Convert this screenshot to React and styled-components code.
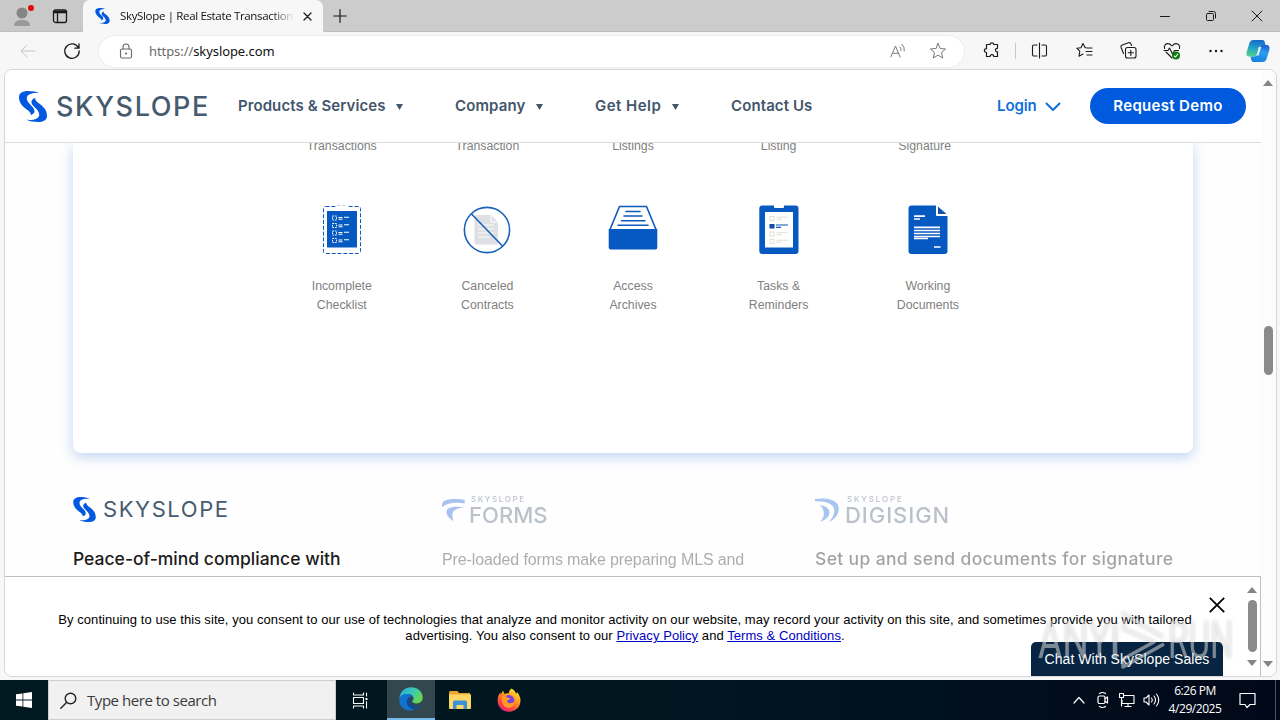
import React from 'react';
import styled, { createGlobalStyle } from 'styled-components';

const GlobalStyle = createGlobalStyle`
    * {
        box-sizing: border-box;
    }

    body {
        margin: 0;
        overflow: hidden;
        font-family: "Liberation Sans", Arial, sans-serif;
    }
`;

const Screen = styled.div`
    position: relative;
    width: 1280px;
    height: 720px;
    display: flex;
    flex-direction: column;
    background: #f7f7f7;
    overflow: hidden;
    white-space: nowrap;

    svg {
        display: block;
        flex: none;
    }
`;

/* browser chrome */

const TabStrip = styled.div`
    display: flex;
    height: 32px;
    background: #cccccc;
`;

const ProfileArea = styled.div`
    display: flex;
    align-items: center;
    gap: 18px;
    width: 83px;
    padding-left: 12px;
    background: #c9c9c9;
    border-bottom: 1px solid #bdbdbd;
    border-radius: 0 0 4px 0;
`;

const Tab = styled.div`
    display: flex;
    align-items: center;
    width: 240px;
    padding: 0 9px 0 12px;
    background: #f7f7f7;
    border-radius: 7px 7px 0 0;
`;

const TabTitle = styled.span`
    width: 176px;
    margin: 0 7px 0 10px;
    overflow: hidden;
    font: 11.5px/16px "Open Sans", sans-serif;
    letter-spacing: -0.34px;
    color: #111;
    mask-image: linear-gradient(90deg, #000 152px, transparent 174px);
`;

const TabRest = styled.div`
    flex: 1;
    display: flex;
    align-items: center;
    justify-content: space-between;
    padding: 0 17px 0 10px;
    border-bottom: 1px solid #bdbdbd;
    border-radius: 0 0 0 4px;
`;

const WindowButtons = styled.div`
    display: flex;
    gap: 34px;
`;

const Toolbar = styled.div`
    display: flex;
    align-items: center;
    height: 37px;
    background: #f7f7f7;
`;

const ToolCell = styled.div`
    display: flex;
    align-items: center;
    justify-content: center;
    width: ${({ $w }) => $w || 44}px;
    height: 30px;
`;

const AddressBar = styled.div`
    display: flex;
    align-items: center;
    width: 865px;
    height: 31px;
    margin: 1px 5px 0;
    padding: 0 6px 0 19px;
    background: #fff;
    border-radius: 16px;
    box-shadow: 0 0 2px rgba(0, 0, 0, 0.12);
`;

const Url = styled.span`
    flex: 1;
    margin-left: 15px;
    font: 13px/18px "Noto Sans", sans-serif;
    letter-spacing: -0.08px;
    color: #111;

    span {
        color: #6b6b6b;
    }
`;

const Divider = styled.div`
    width: 1px;
    height: 16px;
    margin-left: 2px;
    background: #c8c8c8;
`;

/* page */

const Viewport = styled.div`
    position: relative;
    display: flex;
    width: 1273px;
    height: 608px;
    margin: 0 0 3px 4px;
    background: #fff;
    border: 1px solid #d4d6da;
    border-radius: 8px;
    overflow: hidden;
`;

const Page = styled.div`
    display: flex;
    flex-direction: column;
    width: 1256px;
`;

const Scrollbar = styled.div`
    display: flex;
    flex-direction: column;
    align-items: center;
    flex: 1;
    padding: ${({ $pad }) => $pad};
    background: ${({ $bg }) => $bg};
`;

const Arrow = styled.div`
    border: 5px solid transparent;
    ${({ $down }) => ($down ? 'border-top: 6px solid #858585; border-bottom: 0;' : 'border-bottom: 6px solid #858585; border-top: 0;')}
`;

const Thumb = styled.div`
    width: 9px;
    height: ${({ $h }) => $h}px;
    margin: ${({ $top }) => $top}px 0 auto;
    background: #8a8a8a;
    border-radius: 5px;
`;

const Header = styled.header`
    display: flex;
    align-items: center;
    height: 73px;
    padding: 0 15px 0 14px;
    background: #fff;
    border-bottom: 1px solid #dcdcdc;
`;

const Brand = styled.div`
    display: flex;
    align-items: center;
    gap: ${({ $small }) => ($small ? 7 : 9)}px;
    width: ${({ $small }) => ($small ? 'auto' : '219px')};
    height: ${({ $small }) => ($small ? '26px' : 'auto')};

    span {
        padding-top: 1px;
        font: ${({ $small }) => ($small ? '400 22px' : '500 27px')}/31px Inter, sans-serif;
        letter-spacing: ${({ $small }) => ($small ? 1.6 : 1.6)}px;
        color: #475b6f;
    }
`;

const NavItem = styled.a`
    display: flex;
    align-items: center;
    width: ${({ $w }) => $w}px;
    font: 600 15px/20px Inter, sans-serif;
    letter-spacing: ${({ $ls }) => $ls}px;
    color: ${({ $blue }) => ($blue ? '#0f70da' : '#42566c')};

    svg {
        margin-left: ${({ $gap }) => $gap || 10}px;
        margin-top: 1px;
    }
`;

const DemoButton = styled.button`
    width: 156px;
    height: 36px;
    margin-left: auto;
    padding: 0 0 1px;
    border: 0;
    border-radius: 18px;
    background: #005add;
    color: #fff;
    font: 600 15px/20px Inter, sans-serif;
    letter-spacing: 0.32px;
`;

const Main = styled.main`
    flex: 1;
    padding: 0 68px;
    overflow: hidden;
    background: #fefefe;
`;

const FeatureCard = styled.section`
    height: 310px;
    width: 1120px;
    background: #fff;
    border-radius: 0 0 8px 8px;
    box-shadow: 0 4px 13px rgba(60, 125, 210, 0.32);
`;

const FeatureRow = styled.div`
    display: grid;
    grid-template-columns: repeat(4, 145.6px) ${({ $last }) => $last}px;
    padding-left: 196px;
`;

const Feature = styled.div`
    display: flex;
    flex-direction: column;
    align-items: center;
    margin-top: ${({ $clipped }) => ($clipped ? -6 : 0)}px;

    svg {
        margin: 48px 0 21px;
    }

    span {
        font-size: 12.3px;
        line-height: 19px;
        color: #7f7f7f;
    }
`;

const Products = styled.section`
    display: grid;
    grid-template-columns: 369px 373px 1fr;
    padding-top: 43px;
`;

const Product = styled.div`
    opacity: ${({ $faded }) => ($faded ? 0.4 : 1)};
`;

const ProductLogo = styled.div`
    display: flex;
    height: 26px;
    gap: ${({ $gap }) => $gap}px;

    svg {
        margin-top: 2px;
    }
`;

const ProductName = styled.div`
    color: #56677a;
    font-family: Inter, sans-serif;
    font-weight: 500;

    small {
        display: block;
        margin: -1px 0 0 1px;
        font-size: 8px;
        line-height: 9px;
        letter-spacing: ${({ $sub }) => $sub}px;
    }

    span {
        display: block;
        margin-left: -1px;
        font-size: 22px;
        line-height: 22px;
        letter-spacing: ${({ $ls }) => $ls}px;
    }
`;

const Pitch = styled.p`
    margin: 25px 0 0;
    font: 500 17.5px/24px Inter, sans-serif;
    letter-spacing: ${({ $ls }) => $ls}px;
    color: #1b1b1b;
`;

const PlainPitch = styled(Pitch)`
    margin-top: 26px;
    font: 16px/24px "Liberation Sans", Arial, sans-serif;
    color: #333;
`;

const CookieBanner = styled.div`
    position: relative;
    display: flex;
    height: 100px;
    border-top: 1px solid #bfc0c2;
    border-right: 1px solid #bfc0c2;
    background: #fff;
`;

const CookieText = styled.p`
    width: 1240px;
    margin: 35px 0 0;
    font-size: 13px;
    line-height: 16px;
    letter-spacing: 0.06px;
    text-align: center;
    color: #000;

    a {
        color: #0000c4;
        text-decoration: underline;
    }
`;

const CloseIcon = styled.svg`
    position: absolute;
    left: 1204px;
    top: 20px;
`;

const ChatTab = styled.div`
    position: absolute;
    left: 1026px;
    bottom: 0;
    width: 192px;
    height: 34px;
    border-radius: 5px 5px 0 0;
    background: #072543;
    color: #fff;
    font-size: 14px;
    line-height: 35px;
    letter-spacing: 0.06px;
    text-align: center;
`;

const Watermark = styled.div`
    position: absolute;
    left: 1038px;
    top: 611px;
    display: flex;
    align-items: center;
    width: 200px;
    height: 60px;
    color: rgba(255, 255, 255, 0.45);
    filter: drop-shadow(0 0 1.5px rgba(60, 60, 60, 0.5));
`;

const WatermarkWord = styled.span`
    width: ${({ $w }) => $w}px;
    font: 400 51px/60px Roboto, sans-serif;
    transform: scaleX(${({ $sx }) => $sx});
    transform-origin: 0 50%;
`;

/* taskbar */

const Taskbar = styled.div`
    display: flex;
    align-items: center;
    height: 40px;
    background: linear-gradient(90deg, #001820, #001620 55%, #020819);
`;

const TaskCell = styled.div`
    display: flex;
    align-items: center;
    justify-content: center;
    width: ${({ $w }) => $w || 48}px;
    height: 40px;
    background: ${({ $active }) => ($active ? '#33474f' : 'none')};
    border-bottom: ${({ $active }) => ($active ? '2px solid #76b9ed' : '0')};
`;

const SearchBox = styled.div`
    display: flex;
    align-items: center;
    gap: 10px;
    width: 288px;
    height: 40px;
    padding-left: 11px;
    background: #f1f1f1;
    border: 1px solid #cfcfcf;
    color: #3b3b3b;
    font: 15px/20px "Open Sans", sans-serif;
    letter-spacing: -0.45px;
`;

const Tray = styled.div`
    display: flex;
    align-items: center;
    margin-left: auto;
    height: 40px;
`;

const Clock = styled.div`
    width: 60px;
    font: 12px/18px "Open Sans", sans-serif;
    letter-spacing: -0.45px;
    text-align: center;
    color: #fff;
`;

const ShowDesktop = styled.div`
    width: 5px;
    height: 40px;
    margin-left: 6px;
    border-left: 1px solid #4b525c;
`;

const Line = ({ w = 16, h = w, sw = 1, color = '#1a1a1a', box, children }) => (
    <svg width={w} height={h} viewBox={box || `0 0 ${w} ${h}`} fill="none" stroke={color} strokeWidth={sw} strokeLinecap="round" strokeLinejoin="round">
        {children}
    </svg>
);

const swoosh = 'M20.500 2.200C13 1.500 8.300 3.300 7.800 6.800 7.500 10 10 12.300 12.800 15.200 16 18.500 17.300 21.800 11.800 24.300 12.300 22 10.500 20.500 7.500 18.300 3 15 0 11.500 0 6 0 2 4 0 9 0 13 0 17.500.8 20.500 2.200z';

const SkyMark = ({ w, h }) => (
    <svg width={w} height={h} viewBox="0 0 28 31" fill="#0259e0">
        <path d={swoosh} />
        <path d={swoosh} transform="rotate(180 14 15.5)" />
    </svg>
);

const Caret = () => (
    <svg width="7" height="6" viewBox="0 0 7 6" fill="#42566c">
        <path d="M0 0h7L3.500 6z" />
    </svg>
);

const ChecklistIcon = () => (
    <svg width="50" height="52" viewBox="0 0 50 52" fill="none">
        <rect x="6.500" y="2.500" width="37" height="47" rx="2" stroke="#1059bd" strokeDasharray="4 1.800" />
        <path d="M19 1h12v3H19z" fill="#fff" />
        <path d="M20 1.500h10" stroke="#b9cfee" strokeDasharray="3 2" />
        <path d="M10 7h30v36.500H10z" fill="#0659c0" />
        {[12, 19.500, 27, 34.500].map((y) => (
            <g key={y} stroke="#fff">
                <rect x="15.500" y={y} width="4" height="4" strokeDasharray="1.600 1" />
                <path d={`M21.500 ${y + 1.500}h4M21.500 ${y + 3.200}h4M27 ${y + 1.300}h5`} strokeWidth="1.100" />
            </g>
        ))}
    </svg>
);

const CanceledIcon = () => (
    <svg width="50" height="52" viewBox="0 0 50 52" fill="none">
        <path d="M14 11h15l7 7v21a1.500 1.500 0 0 1-1.500 1.500h-20.500a1.500 1.500 0 0 1-1.500-1.500V12.500z" fill="#dfe0e4" />
        <path d="M29 11v7h7" stroke="#fff" />
        <path d="M16 21h16M16 25h16M16 29h16M16 33h11" stroke="#fafafa" strokeWidth="1.200" />
        <circle cx="25" cy="26" r="22.600" stroke="#1a62bd" strokeWidth="1.600" />
        <path d="M9.500 10l31 32" stroke="#1a5fba" strokeWidth="1.600" />
    </svg>
);

const ArchiveIcon = () => (
    <svg width="50" height="52" viewBox="0 0 50 52" fill="none">
        <path d="M2 25.500L11.500 2.500h27l9.500 23" stroke="#0b5abf" strokeWidth="1.600" />
        <path d="M18 7.500h14M16 12h18M13.500 16.700h23.500M10 21.200h30" stroke="#0b5abf" strokeWidth="1.600" strokeLinecap="round" />
        <path d="M.700 25h48.600v18.500a2 2 0 0 1-2 2H2.700a2 2 0 0 1-2-2z" fill="#0659c0" />
    </svg>
);

const TasksIcon = () => (
    <svg width="50" height="52" viewBox="0 0 50 52" fill="none">
        <rect x="5.300" y="1.500" width="39.200" height="48.500" rx="3" fill="#0659c0" />
        <path d="M20 1h10v2a1 1 0 0 1-1 1h-8a1 1 0 0 1-1-1z" fill="#fff" />
        <path d="M11 8h28v35.500H11z" fill="#fff" />
        {[12.500, 28, 35.500].map((y) => (
            <g key={y} stroke="#dddbd2" strokeWidth=".9">
                <rect x="16" y={y} width="4" height="4" />
                <path d={`M22.500 ${y + 0.700}h11M22.500 ${y + 2.700}h5`} />
            </g>
        ))}
        <path d="M15.500 20h5v4.500h-5z" fill="#0d4fa8" />
        <path d="M22 21h12M22 23.300h5" stroke="#0d59b8" strokeWidth="1.200" />
    </svg>
);

const WorkingIcon = () => (
    <svg width="50" height="52" viewBox="0 0 50 52" fill="none">
        <path d="M8.500 1.500H33v9.500a1 1 0 0 0 1 1h10.500V47a3 3 0 0 1-3 3H8.500a3 3 0 0 1-3-3V4.500a3 3 0 0 1 3-3z" fill="#0659c0" />
        <path d="M35 2.500l8.500 7.500h-8.500z" fill="#1355a5" />
        <path d="M11 12.200h11M11 15h6M11 23.300h26M11 26.500h26M11 29.500h26M11 32.500h26M11 34.500h14M31 43h6.500" stroke="#fff" strokeWidth="1.700" />
    </svg>
);

const EdgeIcon = () => (
    <svg width="24" height="24" viewBox="0 0 24 24">
        <defs>
            <linearGradient id="edgeTop" x1="0" y1="0" x2="1" y2=".5">
                <stop offset="0" stopColor="#28a9e5" />
                <stop offset=".6" stopColor="#3bcbb0" />
                <stop offset="1" stopColor="#66d652" />
            </linearGradient>
        </defs>
        <path d="M.5 11C1 4.500 6 .3 12 .3 19 .3 23.700 5 23.700 10.500c0 3.500-2.700 5.900-6 5.900-3 0-4.500-1-4.500-1.900 0-.8 1.300-1.300 1.300-3.100 0-2.400-2.500-4.500-5.800-4.500C5 6.900 2 8.500.5 11z" fill="url(#edgeTop)" />
        <path d="M.3 12.500C.7 8.500 4.500 6.900 8.700 6.900c2.500 0 4.600 1 5.500 2.800-3-1-6.400 1.300-6.400 5.300 0 4.500 4 7.300 8.300 7.300C9 25.800 0 21.300.3 12.500z" fill="#1273cf" />
        <path d="M7.800 15c0-2.500 1.200-4.300 3-5.200-.8 4.500 1.700 9.200 7.500 9.200 1.500 0 2.700-.3 3.900-1-1.300 2.300-3.700 4.300-6.100 4.400-4.300 0-8.300-3-8.300-7.400z" fill="#124b94" />
    </svg>
);

const FirefoxIcon = () => (
    <svg width="24" height="24" viewBox="0 0 24 24">
        <defs>
            <linearGradient id="foxBody" x1=".8" y1="0" x2=".2" y2="1">
                <stop offset="0" stopColor="#ffe83b" />
                <stop offset=".4" stopColor="#ff9a1f" />
                <stop offset=".7" stopColor="#ff4a3f" />
                <stop offset="1" stopColor="#e6157b" />
            </linearGradient>
        </defs>
        <path d="M14.500.5c3 1.600 4 3.500 4.400 5 .8-.1 1.100-.8 1.100-1.500 2.300 2.700 3.500 5.500 3.500 8.500C23.500 19 18.500 23.700 12 23.700S.6 19 .6 12.700c0-3.500 1-6 2.500-8.200l.7 2L6 2.500 7.500 6c1.500-.7 3-.8 4.300-.5 0-2 1-4 2.700-5z" fill="url(#foxBody)" />
        <circle cx="12" cy="12.300" r="5.300" fill="#7a43dc" />
        <path d="M5 8c3.500-.5 5 .6 5.800 2l2.500.3c-.4 1.400-2 1.500-3 2.200-.7 1.300.5 2.800 3 2.800 2 0 3.400-1 4-2 .6 4-2 6.500-5.700 6.500C7.500 19.800 4 16 5 8z" fill="#ff9b25" />
    </svg>
);

const CopilotIcon = () => (
    <svg width="24" height="24" viewBox="0 0 24 24">
        <defs>
            <linearGradient id="copLeft" x1=".5" y1="0" x2=".3" y2="1">
                <stop offset="0" stopColor="#1669c9" />
                <stop offset=".5" stopColor="#20a5c4" />
                <stop offset="1" stopColor="#56cf8b" />
            </linearGradient>
            <linearGradient id="copRight" x1=".6" y1="0" x2=".4" y2="1">
                <stop offset="0" stopColor="#1c5fd0" />
                <stop offset=".4" stopColor="#2f9df0" />
                <stop offset="1" stopColor="#1583e0" />
            </linearGradient>
        </defs>
        <path d="M7.500 1h9c1.500 0 2 1 2.500 3l.5 2h-3.500c-1.800 0-2.600 1-3 2.400l-2 6.600c-.5 1.600-1.200 2.500-3 2.500H3.500C.6 17.500 0 15.500.8 12.500L3.300 4.500C4 2 5.300 1 7.500 1z" fill="url(#copLeft)" />
        <path d="M16.500 23h-9C6 23 5.500 22 5 20l-.5-2.500H8c1.800 0 2.600-.8 3-2.200l2.200-7C13.700 6.900 14.400 6 16 6h4.500c2.900 0 3.500 2.500 2.700 5.500l-2.500 8c-.7 2.500-2 3.500-4.200 3.500z" fill="url(#copRight)" />
        <path d="M12.800 8h2.400l-2.700 8.500H9.800c.8-.5 1-1 1.300-1.800z" fill="#e6f4fb" />
    </svg>
);

const clippedLabels = ['Transactions', 'Transaction', 'Listings', 'Listing', 'Signature'];

const features = [
    { icon: ChecklistIcon, lines: ['Incomplete', 'Checklist'] },
    { icon: CanceledIcon, lines: ['Canceled', 'Contracts'] },
    { icon: ArchiveIcon, lines: ['Access', 'Archives'] },
    { icon: TasksIcon, lines: ['Tasks &', 'Reminders'] },
    { icon: WorkingIcon, lines: ['Working', 'Documents'] },
];

const Browser = () => (
    <>
        <TabStrip>
            <ProfileArea>
                <svg width="22" height="22" viewBox="0 0 22 22">
                    <circle cx="10" cy="8" r="5.500" fill="#858585" />
                    <path d="M2 21c0-4.500 3.500-6 8-6s8 1.500 8 6z" fill="#999" />
                    <circle cx="19" cy="3" r="3" fill="#e30613" />
                </svg>
                <Line sw={1.3}><rect x="1.500" y="2" width="13" height="12.500" rx="2" /><path d="M2 4h12" strokeWidth="2.400" /><path d="M5.500 5v9" /></Line>
            </ProfileArea>
            <Tab>
                <SkyMark w={15} h={16} />
                <TabTitle>SkySlope | Real Estate Transaction</TabTitle>
                <Line w={9} sw={1.3}><path d="M1 1l7 7M8 1L1 8" /></Line>
            </Tab>
            <TabRest>
                <Line w={14} sw={1.2}><path d="M7 .7v12.600M.7 7h12.600" /></Line>
                <WindowButtons>
                    <Line w={12}><path d="M1.500 6.500h9" /></Line>
                    <Line w={12}><rect x="1.500" y="3.500" width="7" height="7" rx="1" /><path d="M4 1.500h4.500a2 2 0 0 1 2 2V8" /></Line>
                    <Line w={12}><path d="M1 1l10 10M11 1L1 11" /></Line>
                </WindowButtons>
            </TabRest>
        </TabStrip>
        <Toolbar>
            <ToolCell $w={56}><Line color="#c4c4c4"><path d="M15 8H1M7 2L1 8l6 6" /></Line></ToolCell>
            <ToolCell $w={32}><Line w={18} sw={1.3}><path d="M15.500 6A7.200 7.200 0 1 0 16.200 9M16 2v4.200h-4.200" /></Line></ToolCell>
            <ToolCell $w={6} />
            <AddressBar>
                <Line w={16} color="#6a6a6a" sw={1.1}><rect x="2.500" y="6" width="11" height="9" rx="1.500" /><path d="M5 6V4a3 3 0 0 1 6 0v2" /><circle cx="8" cy="10.500" r=".5" fill="#6a6a6a" /></Line>
                <Url><span>https://</span>skyslope.com</Url>
                <ToolCell $w={40}><Line color="#7a7a7a"><path d="M.8 14L5.500 3 10 14M2.400 10.300h6.200M10 4q1.400 1.300 1 3.500M12 1.500q3 2.500 2.300 6.500" /></Line></ToolCell>
                <ToolCell $w={40}><Line w={18} color="#777"><path d="M9 1.500l2.200 5 5.300.5-4 3.600 1.200 5.400L9 13.200 4.300 16l1.200-5.400-4-3.600 5.300-.5z" /></Line></ToolCell>
            </AddressBar>
            <ToolCell><Line w={17} sw={1.2}><path d="M3.500 2.500H7c0-2.300 3.800-2.300 3.800 0h3.700v3.800c-2.700-.4-2.700 4 0 3.600v4.600h-3.700c0-2.500-3.800-2.500-3.800 0H3.500v-4c-2.800 0-2.800-3.800 0-3.800z" /></Line></ToolCell>
            <Divider />
            <ToolCell $w={46}><Line w={17} sw={1.1}><path d="M8.500 1v15M6 3H3a1.500 1.500 0 0 0-1.500 1.500v8A1.500 1.500 0 0 0 3 14h3M11 3h3a1.500 1.500 0 0 1 1.500 1.500v8A1.500 1.500 0 0 1 14 14h-3" /></Line></ToolCell>
            <ToolCell><Line w={17} sw={1.1}><path d="M10 5.800L9 5.600 7 1.500 5 5.700l-4.200.5 3 3-.8 5L7 12M11 6h5M10 9.500h6M11 13h5" /></Line></ToolCell>
            <ToolCell><Line w={17} sw={1.1}><rect x="5.500" y="5.500" width="10.500" height="10.500" rx="2" /><path d="M10.800 8.200v5.200M8.200 10.800h5.200M3.500 11.500L1.100 5.500A2 2 0 0 1 2.300 3l6.200-2.200A2 2 0 0 1 11 2l.6 1.500" /></Line></ToolCell>
            <ToolCell>
                <Line w={18} sw={1.1}>
                    <path d="M1.600 6.500C.5 3.500 3 1.500 5 1.600c2 0 3 1.300 4 2.400 1-1.100 2-2.400 4-2.400 2 0 4.500 2 3.400 5M3 10l6 6M1 8.500h4L6.500 6l3 6 2-3.500h4" />
                    <circle cx="13" cy="13.500" r="4" fill="#107c10" stroke="none" />
                    <path d="M11.300 14l1.200 1 2.300-3" stroke="#fff" />
                </Line>
            </ToolCell>
            <ToolCell><Line w={14} h={4} color="none"><g fill="#1a1a1a"><circle cx="1.500" cy="2" r="1.200" /><circle cx="7" cy="2" r="1.200" /><circle cx="12.500" cy="2" r="1.200" /></g></Line></ToolCell>
            <ToolCell $w={40}><CopilotIcon /></ToolCell>
        </Toolbar>
    </>
);

const SiteHeader = () => (
    <Header>
        <Brand>
            <SkyMark w={28} h={31} />
            <span>SKYSLOPE</span>
        </Brand>
        <NavItem $w={217} $ls={0.08}>Products &amp; Services<Caret /></NavItem>
        <NavItem $w={140} $ls={0.12} $gap={11}>Company<Caret /></NavItem>
        <NavItem $w={136} $ls={0.48} $gap={11}>Get Help<Caret /></NavItem>
        <NavItem $w={266} $ls={0.1}>Contact Us</NavItem>
        <NavItem $w={64} $ls={-0.1} $gap={8} $blue>
            Login
            <Line w={16} h={10} sw={2} color="#0f70da"><path d="M1.500 1.500L8 8l6.500-6.500" /></Line>
        </NavItem>
        <DemoButton>Request Demo</DemoButton>
    </Header>
);

const Content = () => (
    <Main>
        <FeatureCard>
            <FeatureRow $last={146.6}>
                {clippedLabels.map((label) => (
                    <Feature key={label} $clipped><span>{label}</span></Feature>
                ))}
            </FeatureRow>
            <FeatureRow $last={153}>
                {features.map(({ icon: Icon, lines }) => (
                    <Feature key={lines[0]}>
                        <Icon />
                        <span>{lines[0]}</span>
                        <span>{lines[1]}</span>
                    </Feature>
                ))}
            </FeatureRow>
        </FeatureCard>
        <Products>
            <Product>
                <Brand $small>
                    <SkyMark w={23} h={25} />
                    <span>SKYSLOPE</span>
                </Brand>
                <Pitch $ls={0}>Peace-of-mind compliance with</Pitch>
            </Product>
            <Product $faded>
                <ProductLogo $gap={5}>
                    <svg width="23" height="24" viewBox="0 0 23 24" fill="#2a68dc">
                        <path d="M0 9.500C-.5 4 2 2 8 1.200c5-.4 10-.3 14.700.5v3.800C16 4.300 5 4.300 0 9.500z" />
                        <path d="M22.500 9.500c-5 .3-9.500 1.500-11.500 4.300-1 2.500-1 6 .5 9.200-4.500-2.500-7.500-6.500-7-9.800C5.500 8.500 14 7.800 22.500 9.500z" />
                    </svg>
                    <ProductName $ls={0.05} $sub={1.6}>
                        <small>SKYSLOPE</small>
                        <span>FORMS</span>
                    </ProductName>
                </ProductLogo>
                <PlainPitch $ls={-0.12}>Pre-loaded forms make preparing MLS and</PlainPitch>
            </Product>
            <Product $faded>
                <ProductLogo $gap={7}>
                    <svg width="24" height="25" viewBox="0 0 24 25" fill="#2a6fdc">
                        <path d="M0 1c9-1.300 19.500-.4 23 6 2.500 7-2 14-9 17 4.500-5 7-11.500 4-15.500C15 4.500 8 3.300 0 3.300z" />
                        <path d="M4.500 7c5 .5 9.500 3 10 7 .3 4.500-4 8-9.500 9.700 3-3 4.200-6 3.800-9.200C8.500 11 7 9 4.500 7z" />
                    </svg>
                    <ProductName $ls={0.95} $sub={1.85}>
                        <small>SKYSLOPE</small>
                        <span>DIGISIGN</span>
                    </ProductName>
                </ProductLogo>
                <Pitch $ls={0.35}>Set up and send documents for signature</Pitch>
            </Product>
        </Products>
    </Main>
);

const Cookies = () => (
    <CookieBanner>
        <CookieText>
            By continuing to use this site, you consent to our use of technologies that analyze and monitor activity on our website, may record your activity on this site, and sometimes provide you with tailored
            <br />
            advertising. You also consent to our <a>Privacy Policy</a> and <a>Terms &amp; Conditions</a>.
        </CookieText>
        <Scrollbar $bg="#fff" $pad="10px 1px 10px 0">
            <Arrow />
            <Thumb $top={7} $h={52} />
            <Arrow $down />
        </Scrollbar>
        <CloseIcon width="16" height="16" viewBox="0 0 16 16" fill="none" stroke="#000" strokeWidth="1.800">
            <path d="M.8.8l14.400 14.400M15.200.8L.8 15.200" />
        </CloseIcon>
        <ChatTab>Chat With SkySlope Sales</ChatTab>
    </CookieBanner>
);

const WindowsTaskbar = () => (
    <Taskbar>
        <TaskCell>
            <svg width="16" height="16" viewBox="0 0 16 16" fill="#fff"><path d="M0 2.300l6.500-.9v6.200H0zM7.300 1.200L16 0v7.600H7.300zM0 8.400h6.500v6.200L0 13.700zM7.300 8.400H16V16l-8.700-1.200z" /></svg>
        </TaskCell>
        <SearchBox>
            <Line w={17} sw={1.4} color="#222"><circle cx="10.500" cy="6.500" r="5.300" /><path d="M6.500 10.500L.8 16.200" /></Line>
            Type here to search
        </SearchBox>
        <TaskCell $w={51}>
            <Line w={20} h={17} sw={1.1} color="#fff"><path d="M1.500 1v2h10V1M1.500 16v-2h10v2M1.500 5.500h10v6h-10zM14.500 1v3M14.500 9.500V16" /><path d="M13.500 6h2v2h-2z" fill="#fff" stroke="none" /></Line>
        </TaskCell>
        <TaskCell $active><EdgeIcon /></TaskCell>
        <TaskCell $w={50}>
            <svg width="22" height="20" viewBox="0 0 22 20">
                <path d="M0 2.500A1.500 1.500 0 0 1 1.500 1h7L10 3h11v6H0z" fill="#e8a82c" />
                <path d="M0 4.500h22V18a1 1 0 0 1-1 1H1a1 1 0 0 1-1-1z" fill="#ffd767" />
                <path d="M4 12a1.500 1.500 0 0 1 1.500-1.500h11A1.500 1.500 0 0 1 18 12v7h-3.500v-4h-7v4H4z" fill="#3a93d8" />
            </svg>
        </TaskCell>
        <TaskCell><FirefoxIcon /></TaskCell>
        <Tray>
            <TaskCell $w={24}><Line w={12} h={8} sw={1.2} color="#fff"><path d="M1 7l5-5.500L11 7" /></Line></TaskCell>
            <TaskCell $w={24}><Line w={14} h={18} sw={1.2} color="#fff"><rect x="2" y="5" width="7" height="7.500" rx="1.500" /><path d="M9 7.500l2.500-1.500v6L9 10.500M3.500 2.500q3-2 6 0M3.500 15.500q3 2 6 0" /></Line></TaskCell>
            <TaskCell $w={23}><Line w={17} h={16} sw={1.1} color="#fff"><path d="M6 3.500h10v8H4V8M10 11.500v3M7 14.500h6M1.500 1.500h4v4h-4zM3.500 5.500V14" /></Line></TaskCell>
            <TaskCell $w={27}><Line w={18} h={14} sw={1.1} color="#fff"><path d="M1 5v4h2l3 3V2L3 5zM8.500 5q1.500 2 0 4M11 3q3 4 0 8M13.500 1q4.500 6 0 12" /></Line></TaskCell>
            <Clock>6:26 PM<br />4/29/2025</Clock>
            <TaskCell $w={44}><Line w={17} h={17} sw={1.2} color="#fff"><path d="M1 1.500h15v11h-5L8 15.500l-2-3H1z" /></Line></TaskCell>
            <ShowDesktop />
        </Tray>
    </Taskbar>
);

const App = () => (
    <Screen>
        <GlobalStyle />
        <Browser />
        <Viewport>
            <Page>
                <SiteHeader />
                <Content />
                <Cookies />
            </Page>
            <Scrollbar $bg="#fcfcfc" $pad="10px 1px 9px 0">
                <Arrow />
                <Thumb $top={240} $h={49} />
                <Arrow $down />
            </Scrollbar>
        </Viewport>
        <WindowsTaskbar />
        <Watermark>
            <WatermarkWord $w={74} $sx={0.73}>ANY</WatermarkWord>
            <svg width="56" height="60" viewBox="0 0 56 60" fill="none" stroke="currentColor" strokeWidth="4.500">
                <path d="M3 13v35" />
                <path d="M10 2l41 24M12 10v8l30 13-31 17v8l41-23" strokeWidth="3.500" strokeLinejoin="round" />
            </svg>
            <WatermarkWord $w={62} $sx={0.65}>RUN</WatermarkWord>
        </Watermark>
    </Screen>
);

export default App;
